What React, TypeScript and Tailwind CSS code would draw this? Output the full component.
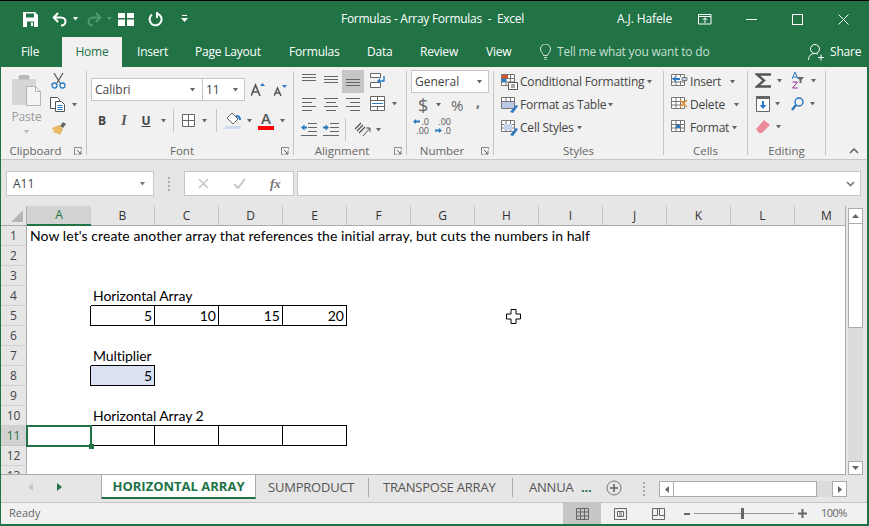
import type { ReactNode } from "react";

const ui = "font-['Open_Sans',sans-serif]";
const cols = ["A", "B", "C", "D", "E", "F", "G", "H", "I", "J", "K", "L", "M"];
const rows = [1, 2, 3, 4, 5, 6, 7, 8, 9, 10, 11, 12, 13];

// which cells carry a border; the neighbour above / left owns the shared pixel
const cellStyle: Record<string, string> = {
  B4: "border-b border-black", C4: "border-b border-black", D4: "border-b border-black", E4: "border-b border-black",
  A5: "border-r border-black",
  B5: "border-r border-b border-black", C5: "border-r border-b border-black", D5: "border-r border-b border-black", E5: "border-r border-b border-black",
  B7: "border-b border-black",
  A8: "border-r border-black",
  B8: "border-r border-b border-black bg-[#d9e1f2]",
  B10: "border-b border-black", C10: "border-b border-black", D10: "border-b border-black", E10: "border-b border-black",
  A11: "border-r border-black",
  B11: "border-r border-b border-black", C11: "border-r border-b border-black", D11: "border-r border-b border-black", E11: "border-r border-b border-black",
};

const cellText: Record<string, string> = {
  A1: "Now let's create another array that references the initial array, but cuts the numbers in half",
  B4: "Horizontal Array",
  B5: "5", C5: "10", D5: "15", E5: "20",
  B7: "Multiplier",
  B8: "5",
  B10: "Horizontal Array 2",
};

function Caret({ className = "", color = "#666" }: { className?: string; color?: string }) {
  return (
    <svg width="7" height="4" viewBox="0 0 7 4" className={`shrink-0 ${className}`}>
      <path d="M1 0h5L3.500 3.500z" fill={color} />
    </svg>
  );
}

function Launcher() {
  return (
    <svg width="8" height="8" viewBox="0 0 8 8" className="mr-[4px] shrink-0">
      <path d="M.5 5V.5h7v2" fill="none" stroke="#8a8a8a" />
      <path d="M.5 .5V7.500h2" fill="none" stroke="#8a8a8a" />
      <path d="M3 3l4 4M7 4v3H4" fill="none" stroke="#666" />
    </svg>
  );
}

function Group({ label, w, launcher, children }: { label: string; w: string; launcher?: boolean; children: ReactNode }) {
  return (
    <div className={`flex h-full shrink-0 ${w}`}>
      <div className="flex min-w-0 flex-1 flex-col">
        <div className="h-[76px] shrink-0">{children}</div>
        <div className="flex h-[16px] items-center">
          <span className={`flex-1 text-center text-[11.5px] leading-[16px] text-[#666] ${launcher ? "pr-[4px]" : ""}`}>{label}</span>
          {launcher && <Launcher />}
        </div>
      </div>
      <div className="my-[4px] w-[1px] bg-[#c6c6c6]" />
    </div>
  );
}

function Lines({ kind }: { kind: "top" | "mid" | "bot" | "left" | "center" | "right" }) {
  const y = kind === "top" ? [1, 4, 7] : kind === "mid" ? [3, 6, 9] : kind === "bot" ? [6, 9, 12] : [1, 5, 9, 13];
  const seg = (i: number) => {
    if (kind === "left") return i % 2 ? "M0 0h10" : "M0 0h14";
    if (kind === "center") return i % 2 ? "M2 0h10" : "M0 0h14";
    if (kind === "right") return i % 2 ? "M4 0h10" : "M0 0h14";
    return "M0 0h14";
  };
  return (
    <svg width="14" height="14" viewBox="0 0 14 14" className="shrink-0">
      {y.map((v, i) => (
        <path key={v} d={seg(i)} transform={`translate(0 ${v + 0.5})`} stroke="#666" fill="none" />
      ))}
    </svg>
  );
}

function GridIcon({ accent }: { accent?: ReactNode }) {
  return (
    <svg width="17" height="16" viewBox="0 0 17 16" className="shrink-0">
      <path d="M.5 .5h13v11H.5zM.5 4.500h13M.5 8h13M5 .5v11M9.500 .5v11" fill="#fff" stroke="#777" />
      {accent}
    </svg>
  );
}

function Styled({ icon, text, caretGap }: { icon: ReactNode; text: string; caretGap: string }) {
  return (
    <div className="flex h-[23px] items-center">
      {icon}
      <span className="ml-[2px] whitespace-nowrap text-[12px] tracking-[-0.2px] text-[#444]">{text}</span>
      <Caret className={caretGap} />
    </div>
  );
}

function Cell({ id }: { id: string }) {
  const text = cellText[id];
  const numeric = text !== undefined && /^\d+$/.test(text);
  return (
    <div
      className={`relative h-[20px] w-[64px] whitespace-nowrap font-['Lato',sans-serif] text-[14px] leading-[20px] text-black ${
        numeric ? "pr-[2px] text-right" : id === "A1" ? "pl-[3px] tracking-[0.065px]" : "pl-[2px] tracking-[-0.08px]"
      } ${cellStyle[id] ?? ""}`}
    >
      {text}
      {id === "A11" && (
        <div className="absolute left-[-1px] top-[-1px] z-10 h-[22px] w-[66px] border-2 border-[#217346]">
          <div className="absolute bottom-[-4px] right-[-4px] h-[5px] w-[5px] bg-[#217346]" />
        </div>
      )}
    </div>
  );
}

export default function App() {
  return (
    <div className={`flex h-[526px] w-[869px] flex-col overflow-hidden bg-[#217346] pb-[2px] pl-px pr-[2px] ${ui}`}>
      <div className="-ml-px -mr-[2px] h-px shrink-0 bg-black" />

      {/* title bar */}
      <div className="flex h-[36px] shrink-0 items-center text-white">
        <svg width="15" height="15" viewBox="0 0 15 15" className="ml-[22px]">
          <path d="M0 0h12l3 3v12H0z" fill="#fff" />
          <path d="M3 1.500h8v4H3z" fill="#217346" />
          <path d="M4 9.500h7V15H4z" fill="#217346" />
          <path d="M8 10.500h2V14H8z" fill="#fff" />
        </svg>
        <svg width="16" height="15" viewBox="0 0 16 15" className="ml-[14px]">
          <path d="M6 1L1.800 5.500 6 10" fill="none" stroke="#fff" strokeWidth="2" />
          <path d="M2 5.500h7c6 0 6 8 0 8" fill="none" stroke="#fff" strokeWidth="2" />
        </svg>
        <Caret className="ml-[4px]" color="#fff" />
        <svg width="16" height="15" viewBox="0 0 16 15" className="ml-[7px]">
          <path d="M10 1l4.200 4.500L10 10" fill="none" stroke="#4f9a74" strokeWidth="2" />
          <path d="M14 5.500H7c-6 0-6 8 0 8" fill="none" stroke="#4f9a74" strokeWidth="2" />
        </svg>
        <Caret className="ml-[4px]" color="#4f9a74" />
        <svg width="16" height="13" viewBox="0 0 16 13" className="ml-[5px]">
          <path d="M0 0h7v5H0zM9 0h7v5H9zM0 6.500h7V13H0zM9 6.500h7V13H9z" fill="#fff" />
        </svg>
        <svg width="15" height="15" viewBox="0 0 15 15" className="ml-[14px]">
          <path d="M4 2.500a6 6 0 1 0 5-1" fill="none" stroke="#fff" strokeWidth="2" />
          <path d="M10 0v6H8V0z" fill="#fff" />
        </svg>
        <svg width="7" height="8" viewBox="0 0 7 8" className="ml-[18px]">
          <path d="M1 .5h5" stroke="#fff" />
          <path d="M0 3h7L3.500 7z" fill="#fff" />
        </svg>
        <span className="ml-[153px] w-[276px] whitespace-pre text-[12px] tracking-[-0.27px]">Formulas - Array Formulas  -  Excel</span>
        <span className="w-[81px] whitespace-nowrap text-[12px] tracking-[-0.1px]">A.J. Hafele</span>
        <svg width="14" height="11" viewBox="0 0 14 11">
          <path d="M.5 .5h12.500v9.500H.5zM.5 2.500h12.500M7 9V4M4.800 6L7 3.800 9.200 6" fill="none" stroke="#fff" />
        </svg>
        <div className="ml-[34px] h-px w-[11px] bg-white" />
        <div className="ml-[35px] h-[11px] w-[11px] border border-white" />
        <svg width="11" height="11" viewBox="0 0 11 11" className="ml-[35px]">
          <path d="M.5 .5l10 10M10.500 .5l-10 10" stroke="#fff" fill="none" />
        </svg>
      </div>

      {/* tab row */}
      <div className="flex h-[30px] shrink-0 items-center text-[12px] tracking-[-0.2px] text-white">
        <span className="ml-[20px] w-[41px]">File</span>
        <span className="flex h-full w-[60px] items-center justify-center bg-[#f1f1f1] text-[#217346]">Home</span>
        <span className="ml-[15px] w-[58px]">Insert</span>
        <span className="w-[94px]">Page Layout</span>
        <span className="w-[78px]">Formulas</span>
        <span className="w-[53px]">Data</span>
        <span className="w-[66px]">Review</span>
        <span className="w-[54px]">View</span>
        <svg width="11" height="16" viewBox="0 0 11 16">
          <path d="M3.500 11.500C3 9 .5 8 .5 5a5 5 0 0 1 10 0c0 3-2.500 4-3 6.500zM4 13.500h3M4.500 15.500h2" fill="none" stroke="#cfe3d8" />
        </svg>
        <span className="ml-[6px] w-[251px] whitespace-nowrap text-[#c6dfd1]">Tell me what you want to do</span>
        <svg width="16" height="17" viewBox="0 0 16 17">
          <circle cx="7" cy="5" r="4.500" fill="none" stroke="#fff" />
          <path d="M.5 16c0-4 2.500-6.500 6.500-6.500 1 0 2 .2 2.800.7M10 13.500h6M13 10.500v6" fill="none" stroke="#fff" />
        </svg>
        <span className="ml-[6px]">Share</span>
      </div>

      {/* ribbon */}
      <div className="flex h-[93px] shrink-0 border-b border-[#c6c6c6] bg-[#f1f1f1] text-[#444]">
        <Group label="Clipboard" w="w-[86px]" launcher>
          <div className="flex">
            <div className="ml-[10px] flex w-[31px] flex-col items-center pt-[8px]">
              <svg width="29" height="31" viewBox="0 0 29 31">
                <path d="M0 4h24v26H0z" fill="#d8d5d6" />
                <path d="M7 4h10V1h-1a4 3 0 0 0-8 0H7z" fill="#bdb9ba" stroke="#bdb9ba" />
                <path d="M14.500 11.500h9l5 5v14h-14z" fill="#f4f4f4" stroke="#b5b5b5" />
                <path d="M23.500 11.500v5h5" fill="none" stroke="#b5b5b5" />
              </svg>
              <span className="mt-[1px] text-[12px] leading-[20px] tracking-[-0.1px] text-[#9a9a9a]">Paste</span>
              <Caret className="mt-[3px]" color="#b5b5b5" />
            </div>
            <div className="ml-[8px] flex flex-col pt-[6px]">
              <svg width="15" height="16" viewBox="0 0 15 16" className="ml-[1px]">
                <path d="M3 0l6 10M12 0L6 10" stroke="#666" strokeWidth="1.400" fill="none" />
                <circle cx="3.500" cy="12.500" r="2.500" fill="none" stroke="#2b79c2" strokeWidth="1.300" />
                <circle cx="11.500" cy="12.500" r="2.500" fill="none" stroke="#2b79c2" strokeWidth="1.300" />
              </svg>
              <div className="mt-[8px] flex items-center">
                <svg width="16" height="15" viewBox="0 0 16 15">
                  <path d="M.5 .5h7l2 2v9h-9z" fill="#fff" stroke="#555" />
                  <path d="M5.500 4.500h6l3 3v7h-9z" fill="#fff" stroke="#555" />
                  <path d="M7.500 8.500h5M7.500 10.500h5M7.500 12.500h5" stroke="#2b79c2" />
                </svg>
                <Caret className="ml-[5px]" />
              </div>
              <svg width="17" height="15" viewBox="0 0 17 15" className="mt-[8px]">
                <path d="M10 6l3-4 3 2-3 4z" fill="#666" />
                <path d="M2 8l7-3 4 4-3 6-3-2-1 1-1-2-2 1 1-3-2-1z" fill="#e8b965" />
              </svg>
            </div>
          </div>
        </Group>

        <Group label="Font" w="w-[207px]" launcher>
          <div className="flex items-center pl-[4px] pt-[11px]">
            <div className="flex h-[23px] w-[112px] items-center justify-between border border-[#c6c6c6] bg-white pl-[3px] pr-[6px] text-[12px] text-[#444]">
              Calibri
              <Caret />
            </div>
            <div className="flex h-[23px] w-[42px] items-center justify-between border border-l-0 border-[#c6c6c6] bg-white pl-[3px] pr-[5px] text-[12px] text-[#444]">
              11
              <Caret />
            </div>
            <svg width="14" height="13" viewBox="0 0 14 13" className="ml-[6px]">
              <path d="M0 13L4.500 2 9 13M2 9h5" fill="none" stroke="#555" strokeWidth="1.600" />
              <path d="M9 3h5l-2.500-3z" fill="#2b79c2" />
            </svg>
            <svg width="13" height="11" viewBox="0 0 13 11" className="ml-[9px] mt-[2px]">
              <path d="M0 11L3.500 3 7 11M1.500 8h4" fill="none" stroke="#555" strokeWidth="1.500" />
              <path d="M8 0h5l-2.500 3z" fill="#2b79c2" />
            </svg>
          </div>
          <div className="flex items-center pl-[4px] pt-[8px]">
            <span className="w-[22px] text-center text-[12px] font-bold leading-[18px] text-[#444]">B</span>
            <span className="w-[22px] text-center font-['Liberation_Serif',serif] text-[14px] font-bold italic leading-[18px] text-[#555]">I</span>
            <span className="w-[22px] text-center text-[12px] font-bold leading-[18px] text-[#444] underline">U</span>
            <Caret className="ml-[3px]" />
            <div className="ml-[6px] h-[23px] w-px bg-[#c6c6c6]" />
            <svg width="13" height="13" viewBox="0 0 13 13" className="ml-[8px]">
              <path d="M.5 .5h12v12H.5zM.5 6.500h12M6.500 .5v12" fill="#fff" stroke="#666" />
            </svg>
            <Caret className="ml-[6px]" />
            <div className="ml-[8px] h-[23px] w-px bg-[#c6c6c6]" />
            <svg width="16" height="17" viewBox="0 0 16 17" className="ml-[8px]">
              <path d="M7 1l6 6-5 5-6-6z" fill="#fff" stroke="#666" />
              <path d="M11 4c2 0 4 1 4 4" fill="none" stroke="#2b79c2" strokeWidth="2" />
              <path d="M0 14h16v3H0z" fill="#cfdcf0" />
            </svg>
            <Caret className="ml-[5px]" />
            <div className="ml-[5px] flex w-[16px] flex-col items-center">
              <span className="h-[14px] text-[15px] font-semibold leading-[14px] text-[#555]">A</span>
              <div className="mt-[1px] h-[4px] w-[16px] bg-[#ff0000]" />
            </div>
            <Caret className="ml-[5px]" />
          </div>
        </Group>

        <Group label="Alignment" w="w-[113px]" launcher>
          <div className="flex items-start pl-[8px] pt-[3px]">
            <div className="mt-[3px]"><Lines kind="top" /></div>
            <div className="ml-[8px] mt-[3px]"><Lines kind="mid" /></div>
            <div className="ml-[4px] h-[23px] w-[22px] bg-[#c6c6c6] pl-[4px] pt-[3px]"><Lines kind="bot" /></div>
            <svg width="17" height="16" viewBox="0 0 17 16" className="ml-[6px] mt-[3px]">
              <path d="M.5 .5h10v4H.5zM.5 9.500h10v5H.5z" fill="#fff" stroke="#666" />
              <path d="M14 3v5H8M10 6L8 8l2 2" fill="none" stroke="#2b79c2" strokeWidth="1.400" />
            </svg>
          </div>
          <div className="flex items-center pl-[8px] pt-[3px]">
            <Lines kind="left" />
            <div className="ml-[8px]"><Lines kind="center" /></div>
            <div className="ml-[8px]"><Lines kind="right" /></div>
            <svg width="15" height="15" viewBox="0 0 15 15" className="ml-[10px]">
              <path d="M.5 .5h14v14H.5zM.5 4.500h14M.5 10.500h14M7.500 .5v4M7.500 10.500v4" fill="#fff" stroke="#666" />
              <path d="M2 7.500h11" stroke="#2b79c2" />
            </svg>
            <Caret className="ml-[6px]" />
          </div>
          <div className="flex items-center pl-[7px] pt-[7px]">
            <svg width="16" height="13" viewBox="0 0 16 13">
              <path d="M7 .5h9M7 4.500h9M7 8.500h9M0 12.500h16" stroke="#666" />
              <path d="M0 4.500l3.500-3v2H6v2H3.500v2z" fill="#2b79c2" />
            </svg>
            <svg width="16" height="13" viewBox="0 0 16 13" className="ml-[6px]">
              <path d="M7 .5h9M7 4.500h9M7 8.500h9M0 12.500h16" stroke="#666" />
              <path d="M6 4.500l-3.500-3v2H0v2h2.500v2z" fill="#2b79c2" />
            </svg>
            <div className="ml-[6px] h-[23px] w-px bg-[#c6c6c6]" />
            <svg width="18" height="16" viewBox="0 0 18 16" className="ml-[8px]">
              <path d="M1 7l6-6M3 9l6-6M5 11l6-6" stroke="#555" strokeWidth="1.300" fill="none" />
              <path d="M9 14l7-8M12 6h4v4" stroke="#555" fill="none" />
            </svg>
            <Caret className="ml-[3px]" />
          </div>
        </Group>

        <Group label="Number" w="w-[87px]" launcher>
          <div className="pl-[4px] pt-[3px]">
            <div className="flex h-[23px] w-[78px] items-center justify-between border border-[#c6c6c6] bg-white pl-[3px] pr-[5px] text-[12px] text-[#444]">
              General
              <Caret />
            </div>
          </div>
          <div className="flex h-[22px] items-center pl-[11px] pt-[1px]">
            <span className="w-[11px] text-[18px] leading-[22px] text-[#666]">$</span>
            <Caret className="ml-[6px]" />
            <span className="ml-[9px] w-[12px] text-[15px] leading-[22px] text-[#666]">%</span>
            <span className="ml-[13px] -mt-[6px] text-[14px] font-bold leading-[14px] text-[#666]">,</span>
          </div>
          <div className="flex items-center pl-[7px] pt-[2px] text-[9px] leading-[9px] text-[#555]">
            <div className="flex w-[15px] flex-col items-end">
              <span className="flex items-center">
                <svg width="7" height="5" viewBox="0 0 7 5" className="mr-[1px]"><path d="M0 2.500L3 0v1.500h4v2H3V5z" fill="#2b79c2" /></svg>
                .0
              </span>
              <span>.00</span>
            </div>
            <div className="ml-[7px] flex w-[15px] flex-col items-end">
              <span>.00</span>
              <span className="flex items-center">
                <svg width="7" height="5" viewBox="0 0 7 5" className="mr-[1px]"><path d="M7 2.500L4 0v1.500H0v2h4V5z" fill="#2b79c2" /></svg>
                .0
              </span>
            </div>
          </div>
        </Group>

        <Group label="Styles" w="w-[170px]">
          <div className="flex flex-col pl-[7px] pt-[3px]">
            <Styled
              caretGap="ml-[2px]"
              text="Conditional Formatting"
              icon={<GridIcon accent={<><path d="M1 1h6v3H1z" fill="#d9502f" /><path d="M1 5h4v3H1z" fill="#2b79c2" /><path d="M7.500 8.500h9v7h-9zM10 11h4M10 13h4" fill="#fff" stroke="#555" /></>} />}
            />
            <Styled
              caretGap="ml-[1px]"
              text="Format as Table"
              icon={<GridIcon accent={<><path d="M1 5h12v6H1z" fill="#b9c9e6" /><path d="M9 15l6-7 2 1-5 7z" fill="#2b79c2" /></>} />}
            />
            <Styled
              caretGap="ml-[2px]"
              text="Cell Styles"
              icon={<GridIcon accent={<><path d="M3 4h8v6H3z" fill="#c5d4ec" /><path d="M9 15l6-7 2 1-5 7z" fill="#2b79c2" /></>} />}
            />
          </div>
        </Group>

        <Group label="Cells" w="w-[84px]">
          <div className="flex flex-col pl-[7px] pt-[3px]">
            <Styled
              caretGap="ml-[8px]"
              text="Insert"
              icon={<GridIcon accent={<><path d="M4 3h13v4H4z" fill="#fff" /><path d="M11 3.500h5v3h-5z" fill="#c5d4ec" stroke="#777" /><path d="M1 5l4-3v2h4v2H5v2z" fill="#2b79c2" /></>} />}
            />
            <Styled
              caretGap="ml-[8px]"
              text="Delete"
              icon={<GridIcon accent={<path d="M9 3l7 7M16 3l-7 7" stroke="#e39a3b" strokeWidth="1.600" />} />}
            />
            <Styled
              caretGap="ml-[2px]"
              text="Format"
              icon={<GridIcon accent={<path d="M5 5h4v3H5z" fill="#2b79c2" />} />}
            />
          </div>
        </Group>

        <Group label="Editing" w="w-[78px]">
          <div className="flex items-center pl-[7px] pt-[5px]">
            <svg width="16" height="15" viewBox="0 0 16 15">
              <path d="M16 1.500H2L9 7.500 2 13.500H16" fill="none" stroke="#555" strokeWidth="2.400" />
            </svg>
            <Caret className="ml-[5px]" />
            <svg width="12" height="17" viewBox="0 0 12 17" className="ml-[9px]">
              <path d="M0 7L3 0l3 7M1 5h4" fill="none" stroke="#2b79c2" />
              <path d="M.5 10h5L.5 16h5" fill="none" stroke="#8e2f8f" />
              <path d="M5 5h7L9.500 8v3h-2V8z" fill="#666" />
            </svg>
            <Caret className="ml-[6px]" />
          </div>
          <div className="flex items-center pl-[8px] pt-[7px]">
            <svg width="14" height="16" viewBox="0 0 14 16">
              <path d="M.5 .5h13v15H.5z" fill="#fff" stroke="#666" />
              <path d="M0 0h14v3H0z" fill="#666" />
              <path d="M6 5h2v4h2.500L7 13 3.500 9H6z" fill="#2b79c2" />
            </svg>
            <Caret className="ml-[4px]" />
            <svg width="13" height="15" viewBox="0 0 13 15" className="ml-[10px]">
              <circle cx="8" cy="5" r="4" fill="none" stroke="#2b79c2" strokeWidth="1.500" />
              <path d="M5 8l-4 5" stroke="#2b79c2" strokeWidth="2.400" fill="none" />
            </svg>
            <Caret className="ml-[5px]" />
          </div>
          <div className="flex items-center pl-[8px] pt-[8px]">
            <svg width="14" height="14" viewBox="0 0 14 14">
              <path d="M0 9l8-9 6 5-8 8H3z" fill="#ec8b9b" />
            </svg>
            <Caret className="ml-[5px]" />
          </div>
        </Group>

        <div className="flex flex-1 items-end justify-end pb-[5px] pr-[8px]">
          <svg width="10" height="6" viewBox="0 0 10 6">
            <path d="M1 5l4-4 4 4" fill="none" stroke="#666" strokeWidth="1.500" />
          </svg>
        </div>
      </div>

      <div className="flex flex-1 flex-col bg-[#e6e6e6]">
        {/* formula bar */}
        <div className="mt-[11px] flex h-[25px] shrink-0 items-center pl-[5px] pr-[6px]">
          <div className="flex h-full w-[148px] items-center justify-between border border-[#c6c6c6] bg-white pl-[6px] pr-[7px] text-[12px] text-[#444]">
            A11
            <Caret color="#777" />
          </div>
          <div className="ml-[14px] flex flex-col gap-[2px]">
            <i className="h-[2px] w-[2px] bg-[#aaa]" />
            <i className="h-[2px] w-[2px] bg-[#aaa]" />
            <i className="h-[2px] w-[2px] bg-[#aaa]" />
            <i className="h-[2px] w-[2px] bg-[#aaa]" />
          </div>
          <div className="ml-[14px] flex h-full w-[110px] items-center border border-[#c6c6c6] bg-white">
            <svg width="11" height="11" viewBox="0 0 11 11" className="ml-[13px]">
              <path d="M1 1l9 9M10 1l-9 9" stroke="#c6c6c6" strokeWidth="1.500" />
            </svg>
            <svg width="13" height="11" viewBox="0 0 13 11" className="ml-[24px]">
              <path d="M1 6l4 4 7-9" fill="none" stroke="#c6c6c6" strokeWidth="2" />
            </svg>
            <span className="ml-[24px] font-['Liberation_Serif',serif] text-[13px] font-bold italic text-[#777]">fx</span>
          </div>
          <div className="ml-[3px] flex h-full flex-1 items-center justify-end border border-[#c6c6c6] bg-white pr-[5px]">
            <svg width="9" height="6" viewBox="0 0 9 6">
              <path d="M1 1l3.500 3.500L8 1" fill="none" stroke="#777" strokeWidth="1.600" />
            </svg>
          </div>
        </div>

        {/* sheet area */}
        <div className="mt-[10px] flex h-[269px] shrink-0">
          <div className="relative w-[845px] shrink-0 overflow-hidden border-b border-r border-[#ababab]">
            <div className="grid w-[858px] grid-cols-[26px_repeat(13,64px)] auto-rows-[20px]">
              <div className="flex items-end justify-end border-b border-r border-[#ababab] bg-[#e6e6e6] pb-[3px] pr-[3px]">
                <svg width="12" height="12" viewBox="0 0 12 12">
                  <path d="M12 0v12H0z" fill="#b5b5b5" />
                </svg>
              </div>
              {cols.map((c) => (
                <div
                  key={c}
                  className={`flex h-[20px] items-center justify-center text-[12px] ${
                    c === "A"
                      ? "border-b-2 border-[#217346] bg-[#d2d2d2] text-[#217346]"
                      : "border-b border-r border-b-[#ababab] border-r-[#c6c6c6] text-[#333]"
                  }`}
                >
                  {c}
                </div>
              ))}
              {rows.map((r) => (
                <div key={r} className="contents">
                  <div
                    className={`flex h-[20px] items-center justify-center border-b border-r text-[12px] ${
                      r === 11
                        ? "border-b-[#c6c6c6] border-r-[#217346] bg-[#d2d2d2] text-[#217346]"
                        : "border-b-[#d0d0d0] border-r-[#ababab] bg-[#e6e6e6] text-[#444]"
                    }`}
                  >
                    {r}
                  </div>
                  {cols.map((c) => (
                    <div key={c} className="bg-white">
                      <Cell id={`${c}${r}`} />
                    </div>
                  ))}
                </div>
              ))}
            </div>
            <svg width="15" height="15" viewBox="0 0 15 15" className="absolute left-[505px] top-[103px] z-20">
              <path d="M5 .5h5V5h4.500v5H10v4.500H5V10H.5V5H5z" fill="#fff" stroke="#000" />
            </svg>
          </div>
          <div className="ml-[2px] mt-[2px] flex w-[15px] shrink-0 flex-col">
            <div className="flex h-[16px] items-center justify-center border border-[#ababab] bg-white">
              <svg width="7" height="4" viewBox="0 0 7 4"><path d="M0 4h7L3.500 0z" fill="#666" /></svg>
            </div>
            <div className="h-[104px] border border-t-0 border-[#ababab] bg-white" />
            <div className="flex-1 bg-[#dcdcdc]" />
            <div className="flex h-[14px] items-center justify-center border border-[#ababab] bg-white">
              <svg width="7" height="4" viewBox="0 0 7 4"><path d="M0 0h7L3.500 4z" fill="#666" /></svg>
            </div>
          </div>
        </div>

        {/* sheet tabs */}
        <div className="flex h-[28px] shrink-0 items-start border-b border-[#c6c6c6] text-[13px] tracking-[-0.22px] text-[#555]">
          <div className="flex h-[23px] w-[100px] shrink-0 items-center pl-[27px]">
            <svg width="5" height="8" viewBox="0 0 5 8"><path d="M5 0v8L0 4z" fill="#c6c6c6" /></svg>
            <svg width="5" height="8" viewBox="0 0 5 8" className="ml-[24px]"><path d="M0 0v8l5-4z" fill="#217346" /></svg>
          </div>
          <div className="-mt-px flex h-[25px] w-[155px] shrink-0 items-center justify-center border-x border-b-2 border-x-[#ababab] border-b-[#217346] bg-white pt-[2px] text-[13px] font-bold tracking-normal text-[#217346]">
            HORIZONTAL ARRAY
          </div>
          <span className="ml-[12px] w-[100px] shrink-0 leading-[25px]">SUMPRODUCT</span>
          <div className="mt-[3px] h-[19px] w-px shrink-0 bg-[#ababab]" />
          <span className="ml-[14px] w-[129px] shrink-0 leading-[25px]">TRANSPOSE ARRAY</span>
          <div className="mt-[3px] h-[19px] w-px shrink-0 bg-[#ababab]" />
          <span className="ml-[16px] w-[52px] shrink-0 leading-[25px]">ANNUA</span>
          <span className="w-[25px] shrink-0 font-bold leading-[25px] text-[#217346]">...</span>
          <svg width="16" height="16" viewBox="0 0 16 16" className="mt-[5px] shrink-0">
            <circle cx="8" cy="8" r="7" fill="none" stroke="#777" />
            <path d="M4 8h8M8 4v8" stroke="#666" strokeWidth="1.600" />
          </svg>
          <div className="ml-[21px] mt-[7px] flex shrink-0 flex-col gap-[2px]">
            <i className="h-[2px] w-[2px] bg-[#aaa]" />
            <i className="h-[2px] w-[2px] bg-[#aaa]" />
            <i className="h-[2px] w-[2px] bg-[#aaa]" />
            <i className="h-[2px] w-[2px] bg-[#aaa]" />
          </div>
          <div className="ml-[14px] mt-[6px] flex h-[16px] w-[188px] shrink-0">
            <div className="flex w-[15px] items-center justify-center border border-[#ababab] bg-white">
              <svg width="4" height="7" viewBox="0 0 4 7"><path d="M4 0v7L0 3.500z" fill="#666" /></svg>
            </div>
            <div className="w-[143px] border-y border-r border-[#ababab] bg-white" />
            <div className="w-[15px] bg-[#dcdcdc]" />
            <div className="flex w-[15px] items-center justify-center border border-[#ababab] bg-white">
              <svg width="4" height="7" viewBox="0 0 4 7"><path d="M0 0v7l4-3.500z" fill="#666" /></svg>
            </div>
          </div>
        </div>

        {/* status bar */}
        <div className="flex flex-1 items-center bg-[#f1f1f1] text-[11px] text-[#666]">
          <span className="ml-[8px] w-[554px] text-[11px]">Ready</span>
          <div className="flex h-full w-[38px] items-center justify-center bg-[#c6c6c6]">
            <svg width="13" height="12" viewBox="0 0 13 12">
              <path d="M.5 .5h12v11H.5zM.5 4h12M.5 8h12M4.500 .5v11M8.500 .5v11" fill="none" stroke="#666" />
            </svg>
          </div>
          <div className="flex w-[38px] justify-center">
            <svg width="13" height="12" viewBox="0 0 13 12">
              <path d="M.5 .5h12v11H.5zM3.500 3.500h6v5h-6zM5 5h3M5 7h3" fill="none" stroke="#666" />
            </svg>
          </div>
          <div className="flex w-[38px] justify-center">
            <svg width="13" height="12" viewBox="0 0 13 12">
              <path d="M.5 .5h12v11H.5zM.5 7.500h5V.5M7.500 7.500h5M7.500 .5v7" fill="none" stroke="#666" />
            </svg>
          </div>
          <div className="ml-[7px] h-[2px] w-[6px] bg-[#666]" />
          <div className="relative ml-[4px] flex h-[11px] w-[100px] items-center">
            <div className="h-px w-full bg-[#999]" />
            <div className="absolute left-[47px] h-[11px] w-[3px] bg-[#666]" />
          </div>
          <svg width="9" height="9" viewBox="0 0 9 9" className="ml-[4px]">
            <path d="M0 4.500h9M4.500 0v9" stroke="#666" strokeWidth="2" />
          </svg>
          <span className="ml-[14px] tracking-[-0.5px]">100%</span>
        </div>
      </div>
    </div>
  );
}
